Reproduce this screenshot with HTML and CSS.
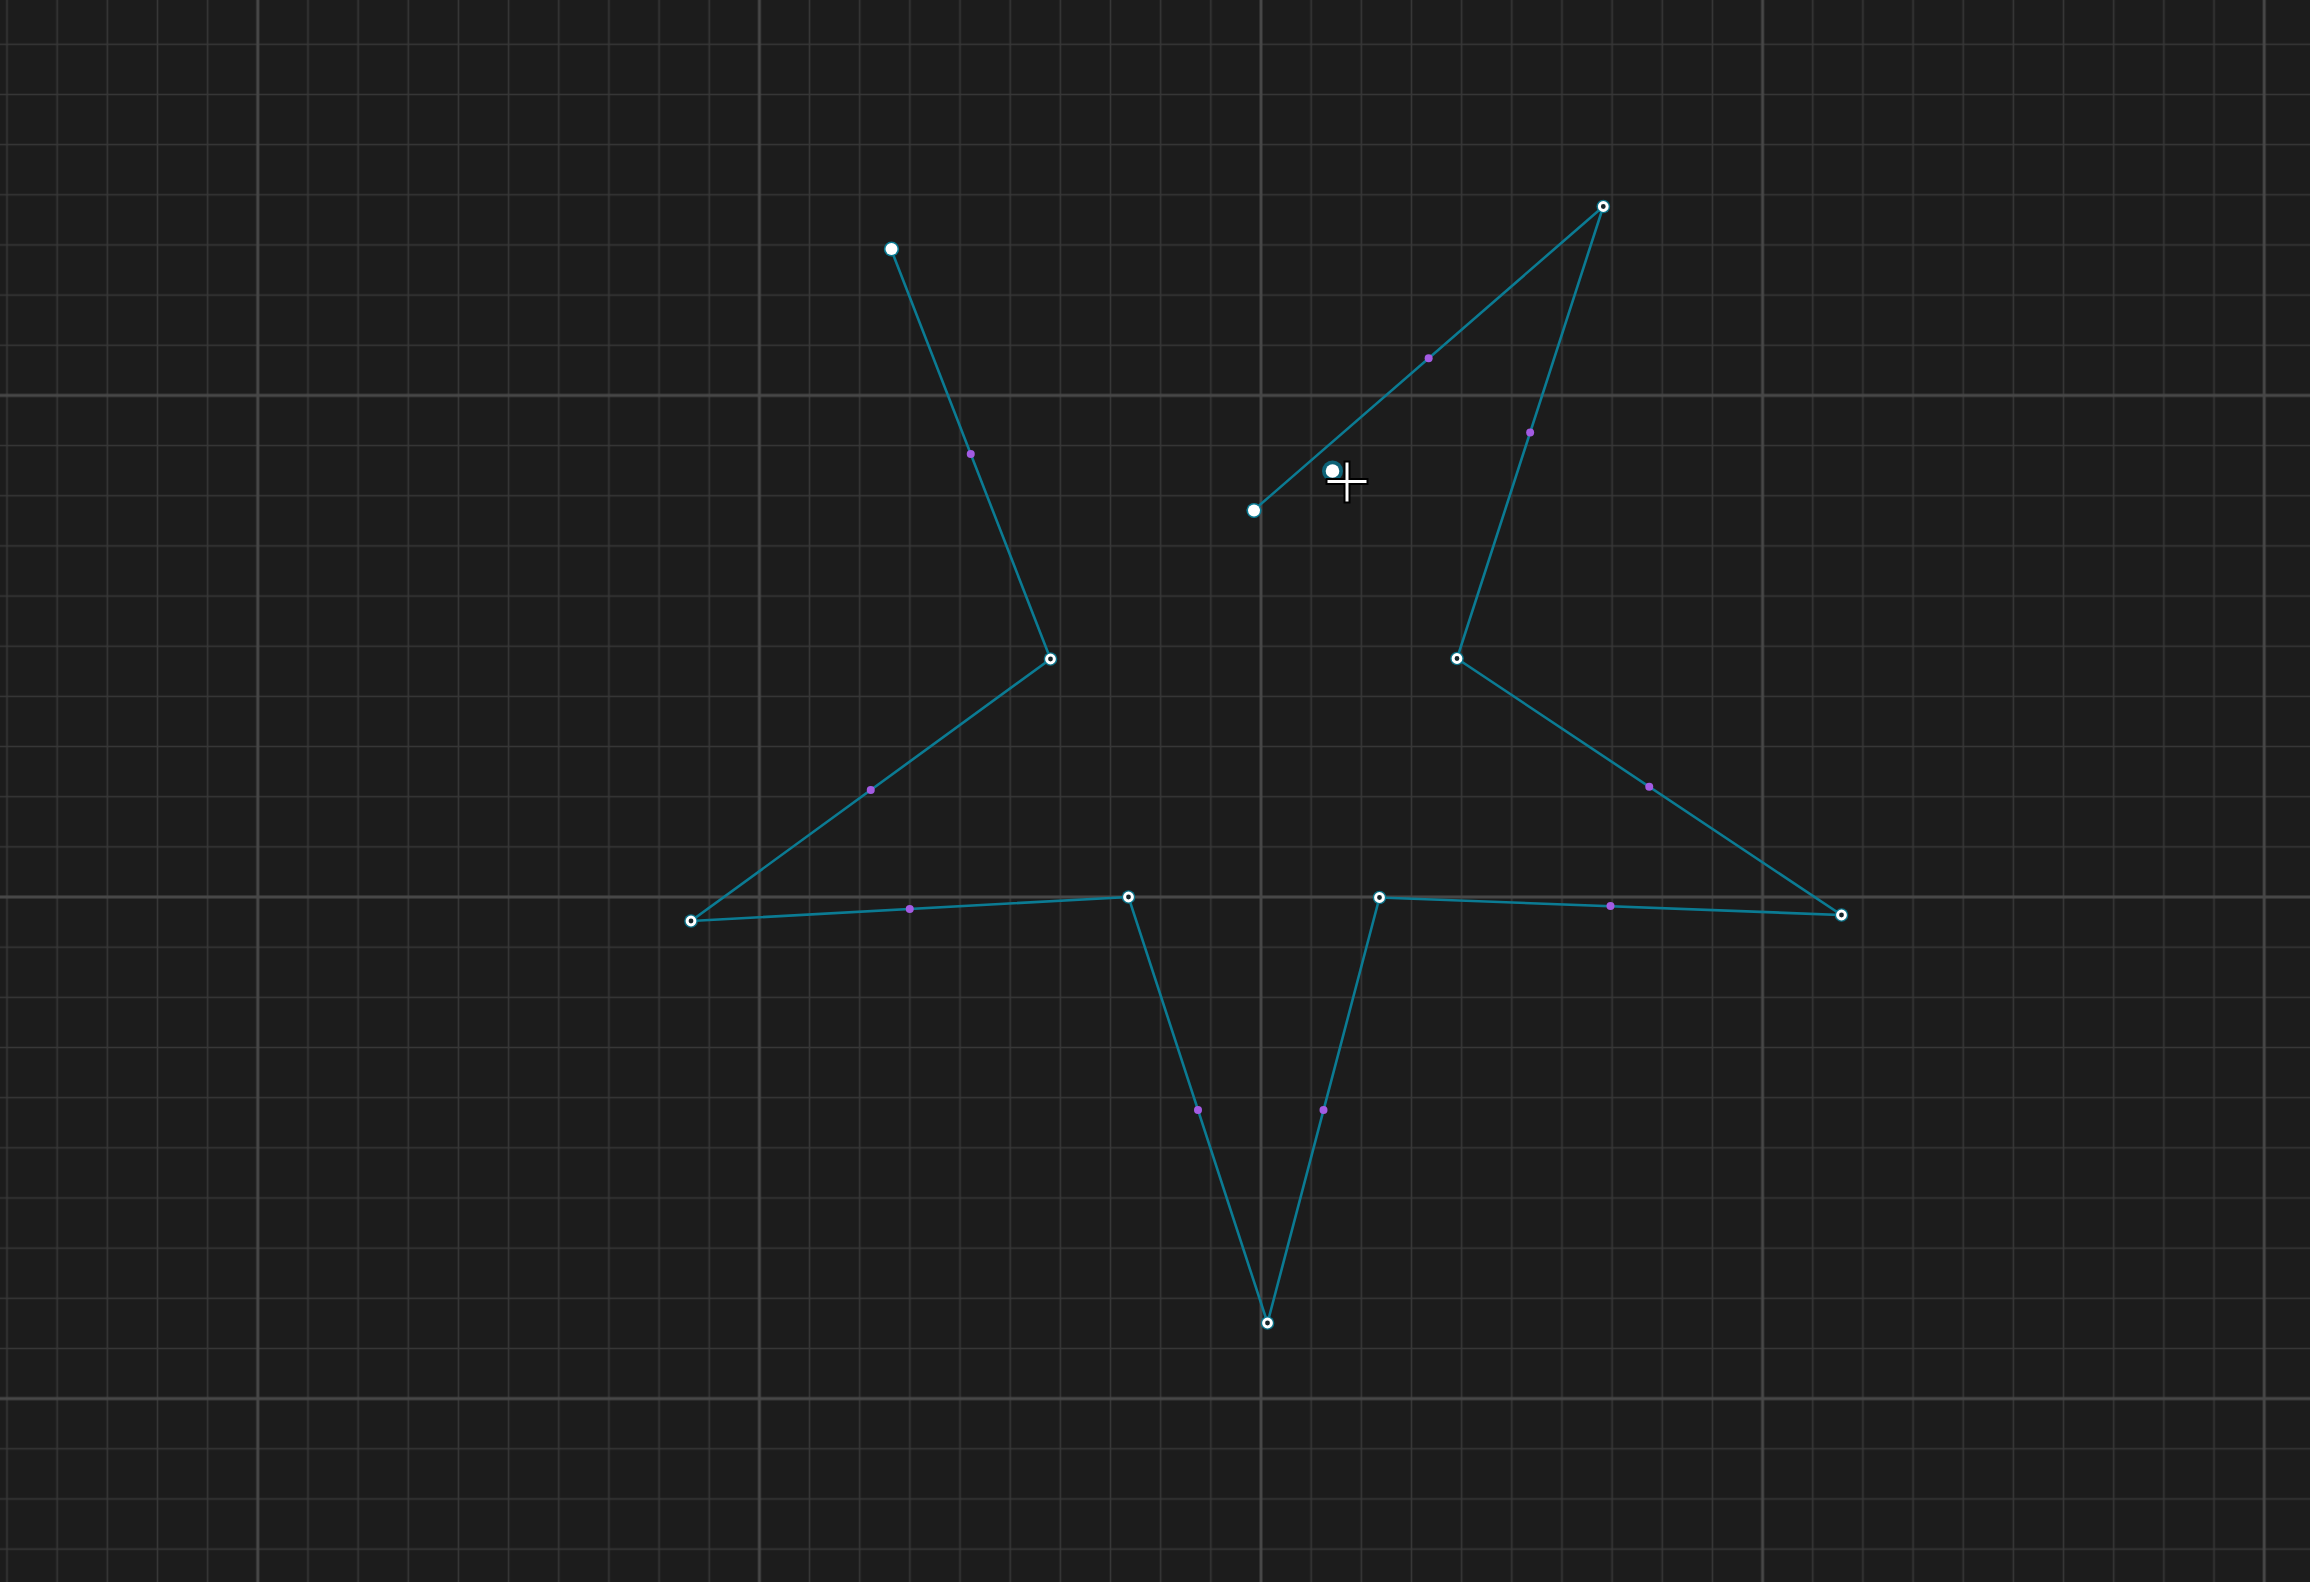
FILE: index.html
```html
<!DOCTYPE html>
<html lang="en">
<head>
<meta charset="utf-8">
<title>Pen tool canvas</title>
<link rel="stylesheet" href="styles.css">
</head>
<body>
<main class="canvas">
<svg class="board" width="2310" height="1582" viewBox="0 0 2310 1582" xmlns="http://www.w3.org/2000/svg">
  <defs>
    <pattern id="minor" patternUnits="userSpaceOnUse" x="-18.08" y="19.22" width="50.16" height="50.16">
      <line class="grid-minor" x1="25.08" y1="0" x2="25.08" y2="50.16"/>
      <line class="grid-minor" x1="0" y1="25.08" x2="50.16" y2="25.08"/>
    </pattern>
    <pattern id="major" patternUnits="userSpaceOnUse" x="7" y="144.6" width="501.6" height="501.6">
      <line class="grid-major" x1="250.8" y1="0" x2="250.8" y2="501.6"/>
      <line class="grid-major" x1="0" y1="250.8" x2="501.6" y2="250.8"/>
    </pattern>
  </defs>
  <rect class="bg" x="0" y="0" width="2310" height="1582"/>
  <rect x="0" y="0" width="2310" height="1582" fill="url(#minor)"/>
  <rect x="0" y="0" width="2310" height="1582" fill="url(#major)"/>

  <polyline class="path" points="891,249 1050.5,659 691,921 1128.5,897 1267.5,1323 1379.5,897.5 1841.5,915 1457,658.5 1603.3,206.5 1254,510"/>

  <g class="mid">
    <circle cx="970.75" cy="454" r="4"/>
    <circle cx="870.75" cy="790" r="4"/>
    <circle cx="909.75" cy="909" r="4"/>
    <circle cx="1198" cy="1110" r="4"/>
    <circle cx="1323.5" cy="1110" r="4"/>
    <circle cx="1610.5" cy="906" r="4"/>
    <circle cx="1649.25" cy="786.75" r="4"/>
    <circle cx="1530.15" cy="432.5" r="4"/>
    <circle cx="1428.65" cy="358.25" r="4"/>
  </g>

  <g class="vertex-halo">
    <circle cx="1050.5" cy="659" r="6.8"/>
    <circle cx="691" cy="921" r="6.8"/>
    <circle cx="1128.5" cy="897" r="6.8"/>
    <circle cx="1267.5" cy="1323" r="6.8"/>
    <circle cx="1379.5" cy="897.5" r="6.8"/>
    <circle cx="1841.5" cy="915" r="6.8"/>
    <circle cx="1457" cy="658.5" r="6.8"/>
    <circle cx="1603.3" cy="206.5" r="6.8"/>
  </g>
  <g class="vertex">
    <circle cx="1050.5" cy="659" r="3.9"/>
    <circle cx="691" cy="921" r="3.9"/>
    <circle cx="1128.5" cy="897" r="3.9"/>
    <circle cx="1267.5" cy="1323" r="3.9"/>
    <circle cx="1379.5" cy="897.5" r="3.9"/>
    <circle cx="1841.5" cy="915" r="3.9"/>
    <circle cx="1457" cy="658.5" r="3.9"/>
    <circle cx="1603.3" cy="206.5" r="3.9"/>
  </g>

  <g class="endpoint-halo">
    <circle cx="891.5" cy="249" r="7.6"/>
    <circle cx="1254" cy="510.5" r="7.6"/>
  </g>
  <g class="endpoint">
    <circle cx="891.5" cy="249" r="6"/>
    <circle cx="1254" cy="510.5" r="6"/>
  </g>

  <circle class="ghost-glow" cx="1332.5" cy="471" r="10.5"/>
  <circle class="ghost" cx="1332.5" cy="471" r="6.8"/>

  <g class="cross">
    <line class="cross-out" x1="1325.5" y1="481.5" x2="1368.5" y2="481.5"/>
    <line class="cross-out" x1="1347" y1="460.5" x2="1347" y2="503.5"/>
    <line class="cross-in" x1="1327.5" y1="481.5" x2="1366.5" y2="481.5"/>
    <line class="cross-in" x1="1347" y1="462.5" x2="1347" y2="501.5"/>
  </g>
</svg>
</main>
</body>
</html>
```
FILE: styles.css
```css
html, body {
  margin: 0;
  padding: 0;
  width: 2310px;
  height: 1582px;
  overflow: hidden;
  background: #1c1c1c;
  font-family: "Liberation Sans", Arial, sans-serif;
}

.canvas {
  display: block;
  width: 2310px;
  height: 1582px;
}

.board {
  display: block;
}

.bg {
  fill: #1c1c1c;
}

.grid-minor {
  stroke: #373737;
  stroke-width: 1.6;
}

.grid-major {
  stroke: #474747;
  stroke-width: 2.8;
}

.path {
  fill: none;
  stroke: #0b7b93;
  stroke-width: 2.6;
  stroke-linejoin: miter;
}

.mid circle {
  fill: #a35be3;
}

.vertex-halo circle {
  fill: #0b7b93;
  opacity: 0.9;
}

.vertex circle {
  fill: #16262b;
  stroke: #ffffff;
  stroke-width: 3;
}

.endpoint-halo circle {
  fill: #0b7b93;
}

.endpoint circle {
  fill: #ffffff;
}

.ghost-glow {
  fill: #0b6f86;
  opacity: 0.85;
}

.ghost {
  fill: #ffffff;
}

.cross-out {
  stroke: #000000;
  stroke-width: 7;
  stroke-linecap: butt;
}

.cross-in {
  stroke: #ffffff;
  stroke-width: 3;
  stroke-linecap: butt;
}
```
